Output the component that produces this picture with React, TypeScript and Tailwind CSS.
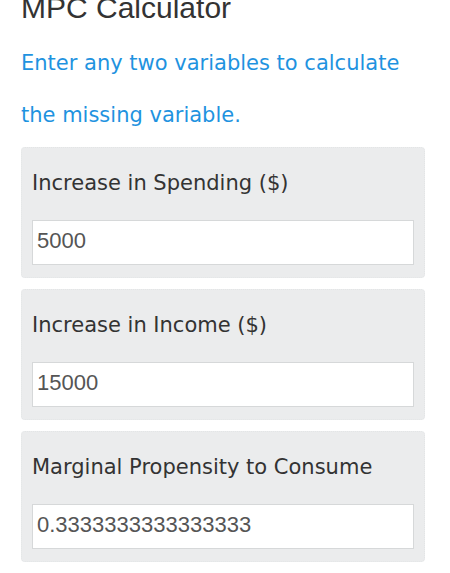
import React from 'react';

const fields = [
  { label: 'Increase in Spending ($)', value: '5000' },
  { label: 'Increase in Income ($)', value: '15000' },
  { label: 'Marginal Propensity to Consume', value: '0.3333333333333333' },
];

export default function App() {
  return (
    <div className="w-[450px] h-[573px] overflow-hidden bg-white px-[21px]">
      <h1 className="mt-[-10px] text-[30px] leading-[36px] text-[#333] font-['Liberation_Sans',Arial,sans-serif]">
        MPC Calculator
      </h1>
      <p className="mt-[11px] text-[21px] leading-[52px] text-[#1f93e0] font-['DejaVu_Sans',Verdana,sans-serif]">
        Enter any two variables to calculate the missing variable.
      </p>
      <div className="mt-[6px] flex flex-col gap-[11px]">
        {fields.map((f) => (
          <div
            key={f.label}
            className="w-[404px] rounded-[4px] bg-[#ebeced] border border-dotted border-[#e3e5e6] px-[10px] pt-[23px] pb-[12px]"
          >
            <div className="text-[21px] leading-[24px] text-[#333] font-['DejaVu_Sans',Verdana,sans-serif]">
              {f.label}
            </div>
            <input
              readOnly
              value={f.value}
              className="mt-[25px] block w-full h-[45px] bg-white border border-[#d6d8d9] pl-[4px] pb-[3px] text-[22px] text-[#555] font-['Liberation_Sans',Arial,sans-serif] outline-none"
            />
          </div>
        ))}
      </div>
    </div>
  );
}
